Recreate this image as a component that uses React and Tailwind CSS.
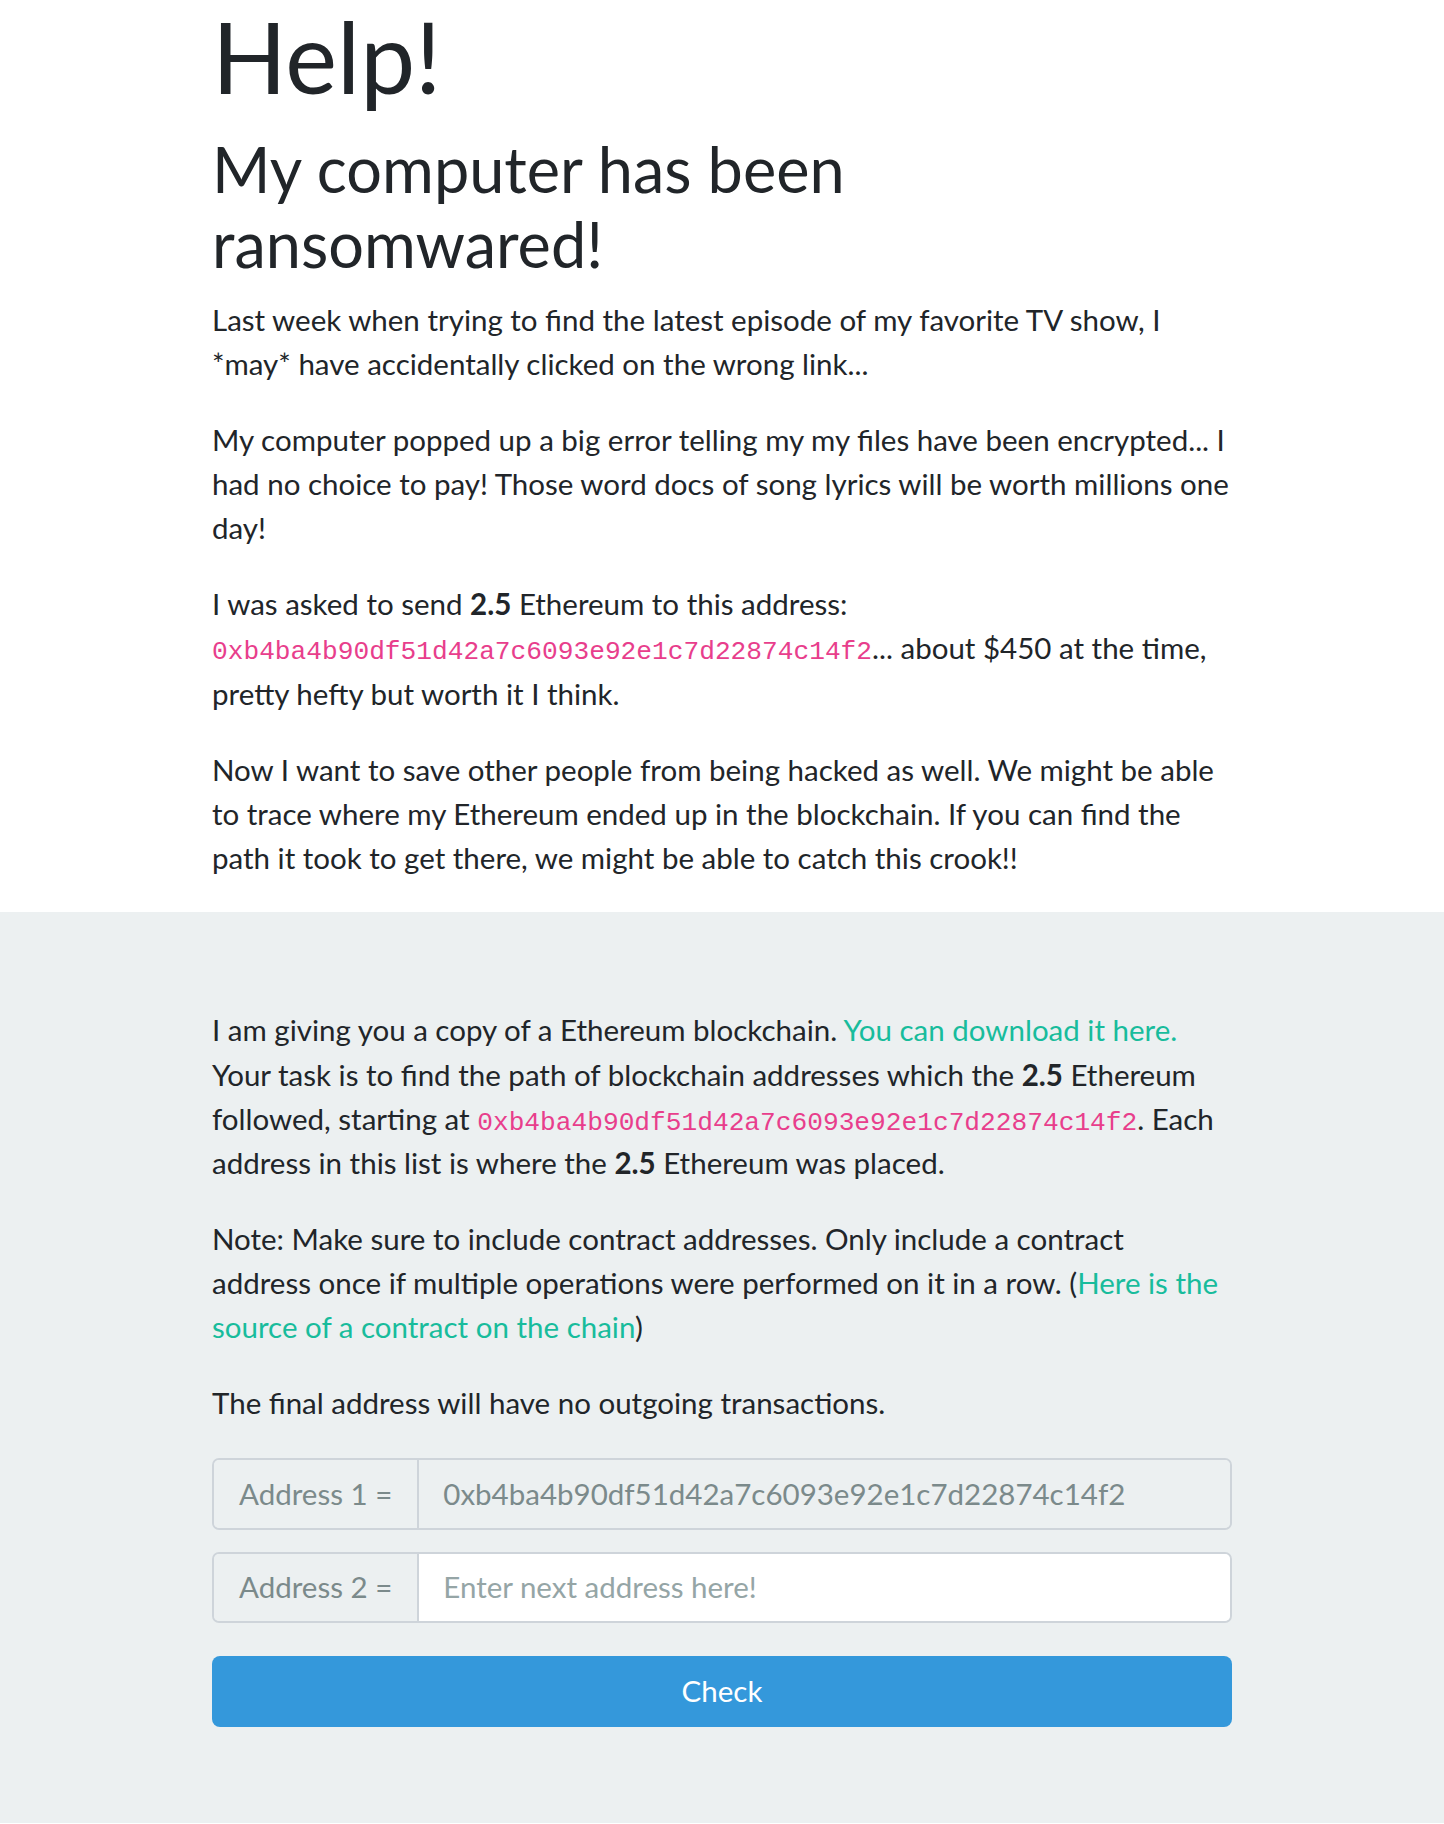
const ADDR = "0xb4ba4b90df51d42a7c6093e92e1c7d22874c14f2";

function Code({ children, tall = false }) {
  return (
    <code
      className={`text-[#e83e8c] text-[26.2px] font-['Liberation_Mono',monospace] ${
        tall ? "leading-[38.4px]" : "leading-none"
      }`}
    >
      {children}
    </code>
  );
}

function AddressRow({ label, children, className = "" }) {
  return (
    <div className={`flex rounded-[7px] border-2 border-[#ced4da] overflow-hidden ${className}`}>
      <span className="flex items-center px-[25px] bg-[#ecf0f1] text-[#7b8a8b] border-r-2 border-[#ced4da] whitespace-nowrap">
        {label}
      </span>
      {children}
    </div>
  );
}

export default function App() {
  return (
    <div className="min-h-[1824px] bg-[#ecf0f1] font-['Lato',sans-serif] text-[#212529]">
      <section className="bg-white pb-[31.5px]">
        <div className="mx-auto w-[1050px] px-[15px]">
          <h1 className="text-[98px] leading-[1.2] -mt-[2.4px] mb-[15.5px]">Help!</h1>
          <h2 className="text-[63px] leading-[1.2] mb-[16px]">My computer has been ransomwared!</h2>
          <div className="text-[29.5px] leading-[1.5] flex flex-col gap-[31.5px]">
            <p>
              Last week when trying to find the latest episode of my favorite TV show, I *may* have
              accidentally clicked on the wrong link...
            </p>
            <p>
              My computer popped up a big error telling my my files have been encrypted... I had no
              choice to pay! Those word docs of song lyrics will be worth millions one day!
            </p>
            <p>
              I was asked to send <b>2.5</b> Ethereum to this address: <Code tall>{ADDR}</Code>...
              about $450 at the time, pretty hefty but worth it I think.
            </p>
            <p>
              Now I want to save other people from being hacked as well. We might be able to trace
              where my Ethereum ended up in the blockchain. If you can find the path it took to get
              there, we might be able to catch this crook!!
            </p>
          </div>
        </div>
      </section>

      <section className="pt-[96.7px] pb-[96px]">
        <div className="mx-auto w-[1050px] px-[15px] text-[29.5px] leading-[1.5]">
          <div className="flex flex-col gap-[31.5px]">
            <p>
              I am giving you a copy of a Ethereum blockchain.{" "}
              <a href="#" className="text-[#18bc9c]">You can download it here.</a> Your task is to
              find the path of blockchain addresses which the <b>2.5</b> Ethereum followed, starting
              at <Code>{ADDR}</Code>. Each address in this list is where the <b>2.5</b> Ethereum
              was placed.
            </p>
            <p className="pr-[4px]">
              Note: Make sure to include contract addresses. Only include a contract address once if
              multiple operations were performed on it in a row. (
              <a href="#" className="text-[#18bc9c]">Here is the source of a contract on the chain</a>)
            </p>
            <p>The final address will have no outgoing transactions.</p>
          </div>

          <AddressRow label="Address 1 =" className="h-[72px] mt-[32.5px]">
            <input
              disabled
              readOnly
              value={ADDR}
              className="flex-1 min-w-0 px-[24px] bg-[#ecf0f1] text-[#7b8a8b] outline-none"
            />
          </AddressRow>
          <AddressRow label="Address 2 =" className="h-[71px] mt-[22px]">
            <input
              placeholder="Enter next address here!"
              className="flex-1 min-w-0 px-[24px] bg-white text-[#212529] placeholder:text-[#95a5a6] outline-none"
            />
          </AddressRow>
          <button className="mt-[33px] w-full h-[71px] rounded-[8px] bg-[#3498db] text-white text-[29.5px]">
            Check
          </button>
        </div>
      </section>
    </div>
  );
}
